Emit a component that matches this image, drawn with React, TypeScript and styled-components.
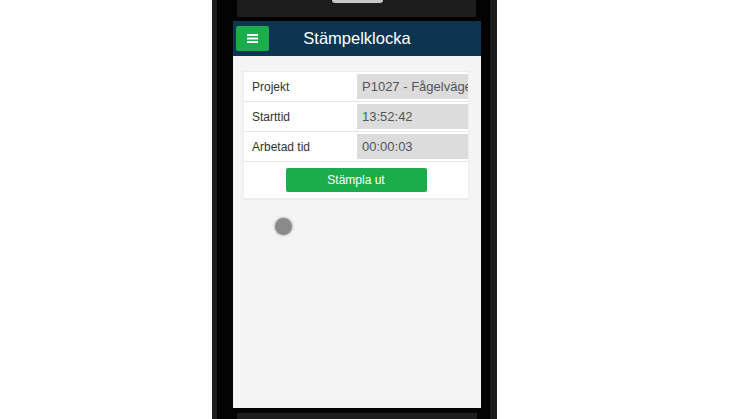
import styled, { createGlobalStyle } from 'styled-components';

const GlobalStyle = createGlobalStyle`
  html, body {
    margin: 0;
    padding: 0;
    background: #fff;
    font-family: "Liberation Sans", Arial, sans-serif;
  }
`;

const rows = [
  { label: 'Projekt', value: 'P1027 - Fågelväge' },
  { label: 'Starttid', value: '13:52:42' },
  { label: 'Arbetad tid', value: '00:00:03' },
];

const App = () => {
  return (
    <>
      <GlobalStyle />
      <Phone>
        <Bezel>
          <TopBar>
            <Speaker />
          </TopBar>
          <Screen>
            <Header>
              <MenuButton>
                <svg width="11" height="9" viewBox="0 0 11 9">
                  <rect x="0" y="0" width="11" height="2" fill="#fff" />
                  <rect x="0" y="3.5" width="11" height="2" fill="#fff" />
                  <rect x="0" y="7" width="11" height="2" fill="#fff" />
                </svg>
              </MenuButton>
              <Title>Stämpelklocka</Title>
            </Header>
            <Content>
              <Card>
                {rows.map((r) => (
                  <Row key={r.label}>
                    <Label>{r.label}</Label>
                    <Value>{r.value}</Value>
                  </Row>
                ))}
                <ButtonRow>
                  <StampButton>Stämpla ut</StampButton>
                </ButtonRow>
              </Card>
              <Touch />
            </Content>
          </Screen>
          <BottomBar />
        </Bezel>
      </Phone>
    </>
  );
};

export default App;

const Phone = styled.div`
  margin-left: 212px;
  width: 285px;
  height: 419px;
  box-sizing: border-box;
  padding: 0 7px 0 5px;
  background: #1c1c1c;
  overflow: hidden;
`;

const Bezel = styled.div`
  height: 100%;
  background: #030303;
  padding: 0 9px 0 16px;
  display: flex;
  flex-direction: column;
`;

const TopBar = styled.div`
  height: 17px;
  margin: 0 5px 0 4px;
  background: #1d1d1d;
  position: relative;
  flex-shrink: 0;
`;

const Speaker = styled.div`
  position: absolute;
  left: 95px;
  top: 0;
  width: 51px;
  height: 3px;
  background: #c9c9c9;
  border-radius: 0 0 4px 4px;
`;

const Screen = styled.div`
  margin-top: 4px;
  height: 387px;
  background: #f4f4f4;
  display: flex;
  flex-direction: column;
  flex-shrink: 0;
`;

const Header = styled.header`
  height: 35px;
  background: #0c3551;
  display: flex;
  align-items: center;
  position: relative;
  padding-left: 3px;
`;

const MenuButton = styled.div`
  width: 33px;
  height: 25px;
  background: #1bad4b;
  border-radius: 2px;
  display: flex;
  align-items: center;
  justify-content: center;
`;

const Title = styled.h1`
  position: absolute;
  left: 0;
  right: 0;
  margin: 0;
  text-align: center;
  font-size: 16.5px;
  font-weight: normal;
  color: #fff;
  pointer-events: none;
`;

const Content = styled.div`
  flex: 1;
  padding: 15px 12px 0 10px;
  position: relative;
`;

const Card = styled.div`
  background: #fff;
  border: 1px solid #ececec;
  border-bottom-width: 2px;
`;

const Row = styled.div`
  display: flex;
  height: 29px;
  align-items: center;
  border-bottom: 1px solid #e6e6e6;
`;

const Label = styled.div`
  width: 113px;
  padding-left: 8px;
  box-sizing: border-box;
  font-size: 12px;
  color: #333;
`;

const Value = styled.div`
  flex: 1;
  height: 25px;
  line-height: 25px;
  background: #dcdcdc;
  padding-left: 5px;
  font-size: 13px;
  color: #555;
  white-space: nowrap;
  overflow: hidden;
`;

const ButtonRow = styled.div`
  height: 36px;
  display: flex;
  align-items: center;
  justify-content: center;
`;

const StampButton = styled.button`
  width: 141px;
  height: 24px;
  border: none;
  border-radius: 2px;
  background: #1bad4b;
  color: #fff;
  font-family: "Liberation Sans", Arial, sans-serif;
  font-size: 12px;
  padding: 0;
`;

const Touch = styled.div`
  position: absolute;
  left: 42px;
  top: 162px;
  width: 17px;
  height: 17px;
  border-radius: 50%;
  background: #8a8a8a;
  box-shadow: 0 0 2px 1px rgba(138, 138, 138, 0.5);
`;

const BottomBar = styled.div`
  margin: 5px 4px 0 4px;
  flex: 1;
  background: #1d1d1d;
`;
